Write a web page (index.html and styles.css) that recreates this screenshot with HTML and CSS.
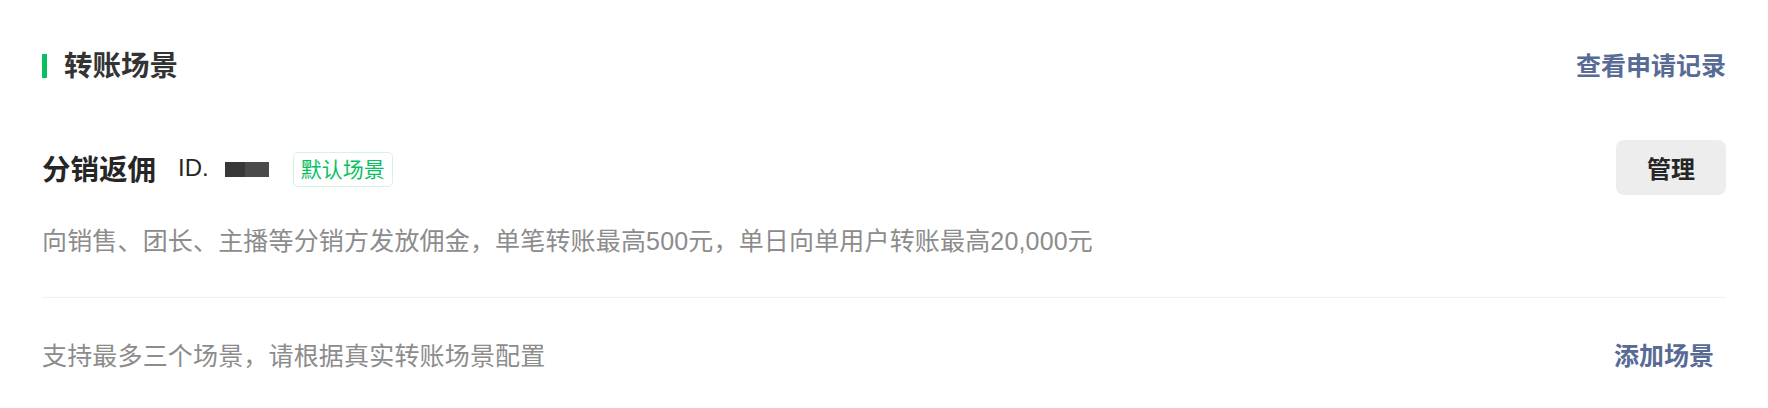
FILE: index.html
```html
<!DOCTYPE html>
<html lang="zh-CN">
<head>
<meta charset="utf-8">
<title>转账场景</title>
<link rel="stylesheet" href="styles.css">
</head>
<body>
<div class="card">
  <div class="header">
    <div class="title"><span class="bar"></span><span class="title-text">转账场景</span></div>
    <a class="link" href="#">查看申请记录</a>
  </div>
  <div class="scene">
    <div class="scene-row">
      <div class="scene-info">
        <span class="scene-name">分销返佣</span>
        <span class="scene-id">ID.</span>
        <span class="mask"></span>
        <span class="badge">默认场景</span>
      </div>
      <button class="btn">管理</button>
    </div>
    <div class="scene-desc">向销售、团长、主播等分销方发放佣金，单笔转账最高500元，单日向单用户转账最高20,000元</div>
  </div>
  <div class="footer">
    <span class="tip">支持最多三个场景，请根据真实转账场景配置</span>
    <a class="link add" href="#">添加场景</a>
  </div>
</div>
</body>
</html>
```

FILE: styles.css
```css
html, body {
  margin: 0;
  padding: 0;
  background: #ffffff;
}
body {
  font-family: "Liberation Sans", "Noto Sans CJK SC", sans-serif;
  color: #1a1a1a;
}
.card {
  padding: 0 42px;
}
.header {
  display: flex;
  align-items: center;
  justify-content: space-between;
  padding-top: 52px;
  height: 28px;
}
.title {
  display: flex;
  align-items: center;
  gap: 17px;
}
.bar {
  width: 5px;
  height: 24px;
  background: #07c160;
}
.title-text {
  font-size: 28.5px;
  line-height: 28px;
  font-weight: 700;
  color: #333333;
}
.link {
  font-size: 25px;
  line-height: 28px;
  font-weight: 700;
  color: #576b95;
  text-decoration: none;
}
.scene {
  margin-top: 60px;
  padding-bottom: 38px;
  border-bottom: 1px solid #f0f0f0;
}
.scene-row {
  display: flex;
  align-items: center;
  justify-content: space-between;
  height: 55px;
}
.scene-info {
  display: flex;
  align-items: center;
}
.scene-name {
  font-size: 28.5px;
  font-weight: 700;
  color: #262626;
}
.scene-id {
  font-size: 24px;
  margin-left: 22px;
  color: #262626;
}
.mask {
  width: 44px;
  height: 15px;
  margin-left: 16px;
  margin-top: 4px;
  background: linear-gradient(to right, #383838 45%, #4a4a4a 45%);
}
.badge {
  margin-left: 24px;
  margin-top: 4px;
  height: 33px;
  padding: 0 7px;
  border: 1px solid #d6f2e0;
  border-radius: 5px;
  font-size: 21px;
  line-height: 33px;
  color: #07c160;
}
.btn {
  width: 110px;
  height: 55px;
  border: none;
  border-radius: 8px;
  background: #ededed;
  font-family: inherit;
  font-size: 24px;
  font-weight: 700;
  color: #262626;
  padding: 0;
}
.scene-desc {
  margin-top: 28px;
  font-size: 25px;
  line-height: 36px;
  letter-spacing: 0.17px;
  color: #8c8c8c;
}
.footer {
  display: flex;
  align-items: center;
  justify-content: space-between;
  margin-top: 40px;
  height: 36px;
}
.tip {
  font-size: 25px;
  line-height: 36px;
  letter-spacing: 0.17px;
  color: #8c8c8c;
}
.add {
  padding-right: 12px;
}
```
